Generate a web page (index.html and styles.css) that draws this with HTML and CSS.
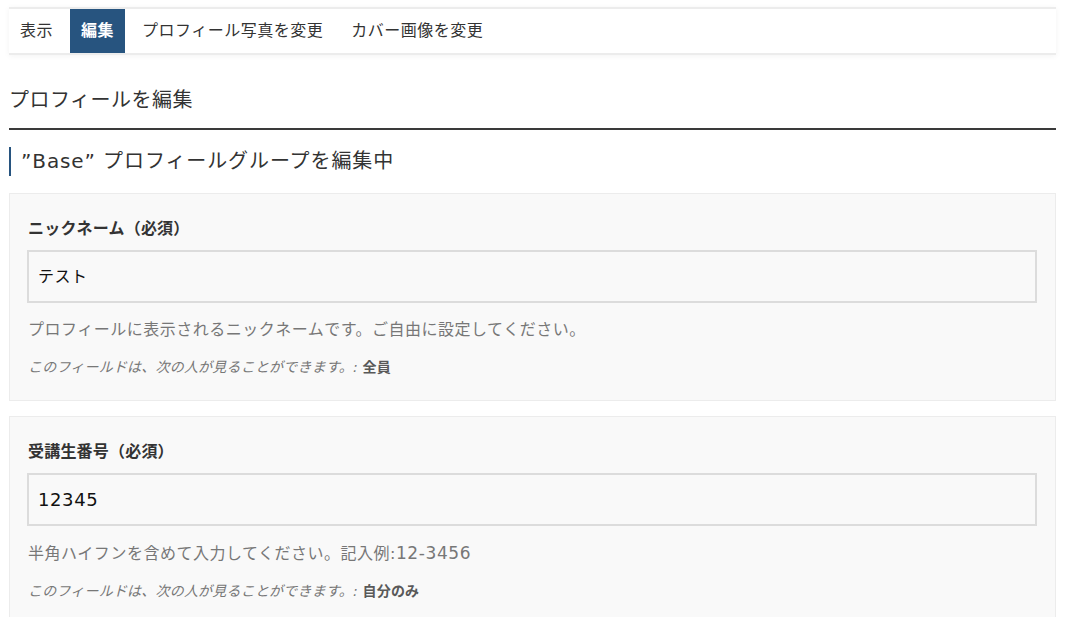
FILE: index.html
```html
<!DOCTYPE html>
<html lang="ja">
<head>
<meta charset="utf-8">
<title>プロフィールを編集</title>
<link rel="stylesheet" href="styles.css">
</head>
<body>
<div class="page">
  <nav class="tabs">
    <a class="tab">表示</a>
    <a class="tab active">編集</a>
    <a class="tab">プロフィール写真を変更</a>
    <a class="tab">カバー画像を変更</a>
  </nav>

  <h1 class="title">プロフィールを編集</h1>

  <h2 class="group">”Base” プロフィールグループを編集中</h2>

  <section class="field">
    <label class="label">ニックネーム（必須）</label>
    <div class="input">テスト</div>
    <p class="help">プロフィールに表示されるニックネームです。ご自由に設定してください。</p>
    <p class="vis">このフィールドは、次の人が見ることができます。: <span class="who">全員</span></p>
  </section>

  <section class="field">
    <label class="label">受講生番号（必須）</label>
    <div class="input input-num">12345</div>
    <p class="help">半角ハイフンを含めて入力してください。記入例:<span class="num">12-3456</span></p>
    <p class="vis">このフィールドは、次の人が見ることができます。: <span class="who">自分のみ</span></p>
  </section>
</div>
</body>
</html>
```

FILE: styles.css
```css
* { box-sizing: border-box; }
html, body { margin: 0; padding: 0; background: #fff; }
body {
  font-family: "DejaVu Sans", "Noto Sans CJK JP", sans-serif;
  color: #333;
  font-size: 16px;
  letter-spacing: 0.5px;
}
.page {
  padding: 7px 10px 0 9px;
}
.tabs {
  display: flex;
  gap: 6px;
  height: 48px;
  border-top: 2px solid #ececec;
  border-bottom: 2px solid #ececec;
  background: #fff;
  box-shadow: 0 1px 6px rgba(0,0,0,0.05);
}
.tab {
  display: block;
  padding: 0 11px;
  line-height: 44px;
  font-size: 16px;
  color: #333;
}
.tab.active {
  background: #27547f;
  color: #fff;
  font-weight: bold;
}
.title {
  margin: 30px 0 0;
  font-size: 20px;
  line-height: 30px;
  font-weight: normal;
  color: #333;
  padding-bottom: 13px;
  border-bottom: 2px solid #3a3a3a;
}
.group {
  margin: 17px 0 0;
  font-size: 20px;
  line-height: 29px;
  font-weight: normal;
  color: #333;
  border-left: 2px solid #27547f;
  padding-left: 10px;
  letter-spacing: 0.9px;
}
.field {
  margin-top: 17px;
  background: #f9f9f9;
  border: 1px solid #ececec;
  padding: 23px 18px 23px 17px;
}
.field + .field { margin-top: 15px; }
.label {
  display: block;
  font-size: 16px;
  line-height: 24px;
  font-weight: bold;
  color: #333;
  padding-left: 1px;
  letter-spacing: 0.2px;
}
.input {
  margin-top: 9px;
  height: 53px;
  border: 2px solid #dcdcdc;
  background: #f9f9f9;
  padding: 0 9px;
  line-height: 49px;
  font-size: 16px;
  color: #111;
}
.input-num {
  font-size: 18px;
  letter-spacing: 0.6px;
}
.help {
  margin: 15px 0 0;
  padding-left: 1px;
  font-size: 16px;
  line-height: 24px;
  color: #777;
}
.num {
  font-size: 17px;
  letter-spacing: 0.6px;
}
.vis {
  margin: 15px 0 0;
  padding-left: 1px;
  font-size: 14px;
  line-height: 20px;
  font-style: italic;
  color: #777;
  letter-spacing: 0.2px;
}
.who {
  font-style: normal;
  font-weight: bold;
  color: #595959;
}
```
